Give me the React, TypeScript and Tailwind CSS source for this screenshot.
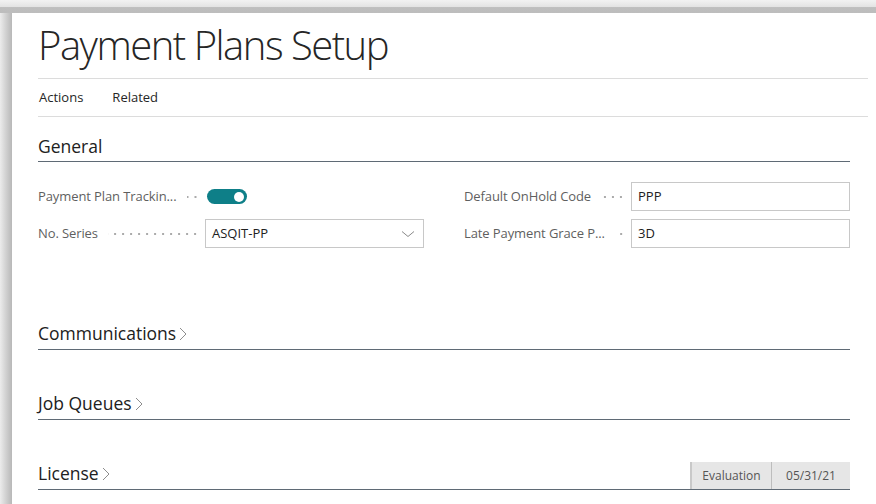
import React from "react";

const dots =
  "bg-[radial-gradient(circle,#a9a9a9_0.7px,transparent_1.1px)] bg-[length:8px_4px] bg-repeat-x bg-right";

function Chevron() {
  return (
    <svg width="10" height="16" viewBox="0 0 10 16" className="ml-[2px] mt-[2px]">
      <polyline points="2,2 8,8 2,14" fill="none" stroke="#808080" strokeWidth="0.9" />
    </svg>
  );
}

function SectionHeader({ title, right }: { title: string; right?: React.ReactNode }) {
  return (
    <div className="flex items-end mr-[18px] border-b border-[#5f6a75] h-[27px]">
      <div className="flex items-center pb-[3px] text-[17.5px] text-[#212121]">
        {title}
        <Chevron />
      </div>
      <div className="flex-1" />
      {right}
    </div>
  );
}

function Field({ label, children }: { label: string; children: React.ReactNode }) {
  return (
    <div className="flex items-center h-[29px]">
      <div className="w-[167px] flex items-center shrink-0">
        <span className="text-[13px] tracking-[-0.1px] text-[#5f5f5f] whitespace-nowrap">{label}</span>
        <div className={`flex-1 h-[4px] ml-[10px] mr-[6px] ${dots}`} />
      </div>
      <div className="flex-1">{children}</div>
    </div>
  );
}

function TextBox({ value, chevron }: { value: string; chevron?: boolean }) {
  return (
    <div className="h-[29px] border border-[#c8c8c8] flex items-center pl-[6px] pr-[8px] text-[13px] text-[#212121]">
      <span className="flex-1">{value}</span>
      {chevron && (
        <svg width="14" height="8" viewBox="0 0 14 8">
          <polyline points="1,1.5 7,6.5 13,1.5" fill="none" stroke="#8a8a8a" strokeWidth="1" />
        </svg>
      )}
    </div>
  );
}

export default function App() {
  return (
    <div className="w-[876px] h-[504px] overflow-hidden flex flex-col bg-white font-['Open_Sans','Noto_Sans',sans-serif]">
      <div className="h-[13px] shrink-0 bg-[linear-gradient(to_bottom,#f2f2f2_0%,#e4e4e4_50%,#bebebe_58%,#bdbdbd_100%)]" />
      <div className="flex flex-1 min-h-0">
        <div className="w-[12px] shrink-0 bg-[linear-gradient(to_right,#ececec_0%,#d6d6d6_40%,#c4c4c4_75%,#b8b8b8_100%)]" />
        <div className="flex-1 flex flex-col pl-[26px] pr-[8px]">
          <div className="h-[65px] flex items-center">
            <h1 className="text-[40px] font-light text-[#262626] tracking-[-1.5px] leading-none mt-[-2px]">
              Payment Plans Setup
            </h1>
          </div>
          <div className="h-[39px] border-y border-[#dcdcdc] flex items-center gap-[29px] pl-[1px] text-[13px] text-[#262626]">
            <span>Actions</span>
            <span>Related</span>
          </div>

          <div className="mt-[19px]">
            <div className="flex items-end mr-[18px] border-b border-[#5f6a75] h-[26px]">
              <div className="pb-[2px] text-[17.5px] text-[#212121]">General</div>
            </div>
          </div>

          <div className="mt-[20px] mr-[18px] grid grid-cols-2 gap-x-[40px]">
            <div className="flex flex-col gap-[8px]">
              <Field label="Payment Plan Trackin...">
                <div className="w-[40px] h-[15px] rounded-full bg-[#0e7f88] flex items-center justify-end pr-[3px] ml-[2px]">
                  <div className="w-[10px] h-[10px] rounded-full bg-white" />
                </div>
              </Field>
              <Field label="No. Series">
                <TextBox value="ASQIT-PP" chevron />
              </Field>
            </div>
            <div className="flex flex-col gap-[8px]">
              <Field label="Default OnHold Code">
                <TextBox value="PPP" />
              </Field>
              <Field label="Late Payment Grace P...">
                <TextBox value="3D" />
              </Field>
            </div>
          </div>

          <div className="mt-[75px]">
            <SectionHeader title="Communications" />
          </div>
          <div className="mt-[43px]">
            <SectionHeader title="Job Queues" />
          </div>
          <div className="mt-[43px]">
            <SectionHeader
              title="License"
              right={
                <div className="flex h-[27px] text-[12px] text-[#555555]">
                  <div className="w-[81px] flex items-center justify-center bg-[#e6e6e6] border-l-2 border-[#c9c9c9]">
                    Evaluation
                  </div>
                  <div className="w-[79px] flex items-center justify-center bg-[#e6e6e6] border-l border-[#bdbdbd]">
                    05/31/21
                  </div>
                </div>
              }
            />
          </div>
        </div>
      </div>
    </div>
  );
}
